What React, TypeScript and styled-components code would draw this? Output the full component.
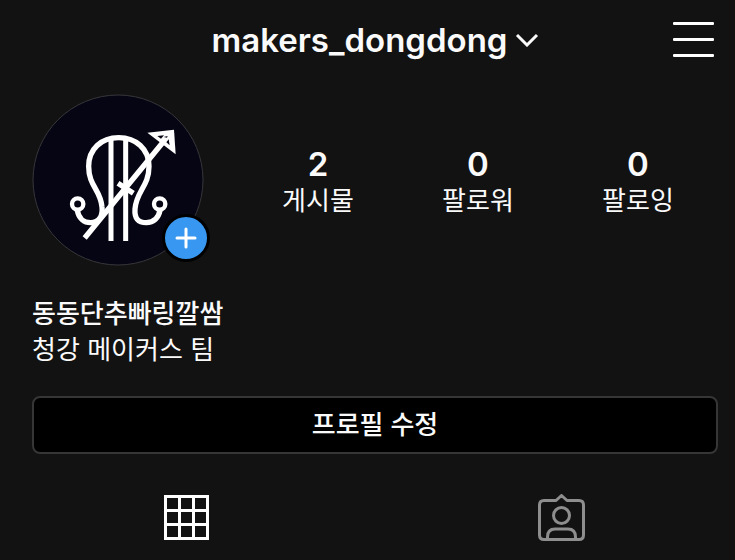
import React from "react";
import styled, { createGlobalStyle } from "styled-components";

const GlobalStyle = createGlobalStyle`
  * { box-sizing: border-box; }
  body {
    margin: 0;
    background: #121212;
    color: #fafafa;
    font-family: Inter, "Noto Sans CJK KR", sans-serif;
  }
  button {
    margin: 0;
    padding: 0;
    border: 0;
    background: none;
    color: inherit;
    font: inherit;
    cursor: pointer;
  }
  svg { display: block; }
`;

const Page = styled.div`
  min-height: 100vh;
  overflow: hidden;
`;

const TopBar = styled.header`
  display: grid;
  grid-template-columns: 42px 1fr 42px;
  align-items: center;
  height: 80px;
  padding: 0 20px 0 36px;
`;

const AccountButton = styled.button`
  grid-column: 2;
  justify-self: center;
  display: flex;
  align-items: center;
  gap: 8px;
  font-size: 33px;
  line-height: 40px;
  font-weight: 600;
`;

const MenuButton = styled.button`
  justify-self: end;
`;

const Summary = styled.section`
  display: flex;
  align-items: center;
  padding: 14px 17px 0 32px;
`;

const Avatar = styled.div`
  position: relative;
  flex: none;
  width: 172px;
  height: 172px;
  margin-right: 34px;
`;

const AddButton = styled.button`
  position: absolute;
  right: -6px;
  bottom: 4px;
  display: grid;
  place-items: center;
  width: 48px;
  height: 48px;
  border: 3px solid #000;
  border-radius: 50%;
  background: #3897f0;
`;

const Stats = styled.ul`
  flex: 1;
  display: flex;
  margin: 0;
  padding: 6px 0 0;
  list-style: none;
`;

const Stat = styled.li`
  flex: 1;
  display: flex;
  flex-direction: column;
  align-items: center;
`;

const Count = styled.strong`
  font-size: 33px;
  line-height: 36px;
  font-weight: 600;
`;

const Label = styled.span`
  font-size: 26px;
  line-height: 38px;
`;

const Bio = styled.section`
  padding: 30px 17px 0 32px;
  font-size: 26px;
  line-height: 36px;
`;

const DisplayName = styled.h1`
  margin: 0;
  font-size: 26px;
  line-height: 36px;
  font-weight: 500;
`;

const BioText = styled.p`
  margin: 0;
`;

const Actions = styled.div`
  padding: 28px 17px 0 32px;
`;

const EditButton = styled.button`
  width: 100%;
  height: 58px;
  border: 2px solid #363636;
  border-radius: 8px;
  background: #000;
  font-size: 26px;
  line-height: 36px;
  font-weight: 500;
`;

const Tabs = styled.nav`
  display: flex;
  padding-top: 40px;
  margin-right: -14px;
`;

const Tab = styled.button<{ $active?: boolean }>`
  flex: 1;
  display: flex;
  justify-content: center;
  color: ${(p) => (p.$active ? "#ffffff" : "#8e8e8e")};
`;

const stats = [
  { count: 2, label: "게시물" },
  { count: 0, label: "팔로워" },
  { count: 0, label: "팔로잉" },
];

const Emblem = () => (
  <svg width="172" height="172" viewBox="36 27 516 516" fill="none" aria-hidden="true">
    <circle cx="294" cy="285" r="255" fill="#060513" stroke="#36363b" strokeWidth="3" />
    <g stroke="#fff" strokeWidth="16">
      <path d="M172 376C176 400 192 413 212 413C238 413 249 392 246 366C242 314 206 304 206 244C206 192 244 158 296 158C348 158 387 192 387 244C387 304 349 318 345 372C343 400 354 413 379 413C401 413 416 398 420 376" />
      <path d="M273 160V468M317 160V468" strokeWidth="15" />
      <path d="M194 459L432 168M294 295L340 325" />
      <circle cx="173" cy="357" r="17" strokeWidth="13" />
      <circle cx="419" cy="357" r="17" strokeWidth="13" />
    </g>
    <path d="M382 143L462 134L467 208Z" fill="#fff" />
    <path d="M412 153L432 151L423 161ZM446 163L449 181L439 172ZM431 156L443 153L441 158Z" fill="#060513" />
  </svg>
);

const Plus = () => (
  <svg width="22" height="22" viewBox="0 0 22 22" stroke="#fff" strokeWidth="3" strokeLinecap="round" aria-hidden="true">
    <path d="M11 2V20M2 11H20" />
  </svg>
);

const Chevron = () => (
  <svg width="24" height="14" viewBox="0 0 24 14" fill="none" stroke="#fafafa" strokeWidth="3" aria-hidden="true">
    <path d="M2 2L12 12L22 2" />
  </svg>
);

const MenuIcon = () => (
  <svg width="42" height="36" viewBox="0 0 42 36" fill="#fff" aria-hidden="true">
    <rect x="0" y="0" width="41" height="3" rx="1" />
    <rect x="0" y="16" width="41" height="3" rx="1" />
    <rect x="0" y="32" width="41" height="3" rx="1" />
  </svg>
);

const GridIcon = () => (
  <svg width="46" height="46" viewBox="0 0 46 46" fill="none" stroke="currentColor" strokeWidth="3" aria-hidden="true">
    <rect x="1.5" y="2.5" width="42" height="42" />
    <path d="M15.5 2V45M29.5 2V45M1 16.5H44M1 30.5H44" />
  </svg>
);

const TaggedIcon = () => (
  <svg width="48" height="48" viewBox="0 0 48 48" fill="none" stroke="currentColor" strokeWidth="3" strokeLinejoin="round" aria-hidden="true">
    <path d="M6 6.500H18L23.500 1.500L29 6.500H41Q45.500 6.500 45.500 11V41Q45.500 45.500 41 45.500H6Q1.500 45.500 1.500 41V11Q1.500 6.500 6 6.500Z" />
    <circle cx="23.500" cy="21.500" r="8" />
    <path d="M9.500 45V43Q9.500 35 17 35H30Q37.500 35 37.500 43V45" />
  </svg>
);

export default function App() {
  return (
    <Page>
      <GlobalStyle />
      <TopBar>
        <AccountButton>
          makers_dongdong
          <Chevron />
        </AccountButton>
        <MenuButton aria-label="메뉴">
          <MenuIcon />
        </MenuButton>
      </TopBar>
      <main>
        <Summary>
          <Avatar>
            <Emblem />
            <AddButton aria-label="추가">
              <Plus />
            </AddButton>
          </Avatar>
          <Stats>
            {stats.map((s) => (
              <Stat key={s.label}>
                <Count>{s.count}</Count>
                <Label>{s.label}</Label>
              </Stat>
            ))}
          </Stats>
        </Summary>
        <Bio>
          <DisplayName>동동단추빠링깔쌈</DisplayName>
          <BioText>청강 메이커스 팀</BioText>
        </Bio>
        <Actions>
          <EditButton>프로필 수정</EditButton>
        </Actions>
        <Tabs>
          <Tab $active aria-label="게시물">
            <GridIcon />
          </Tab>
          <Tab aria-label="태그됨">
            <TaggedIcon />
          </Tab>
        </Tabs>
      </main>
    </Page>
  );
}
